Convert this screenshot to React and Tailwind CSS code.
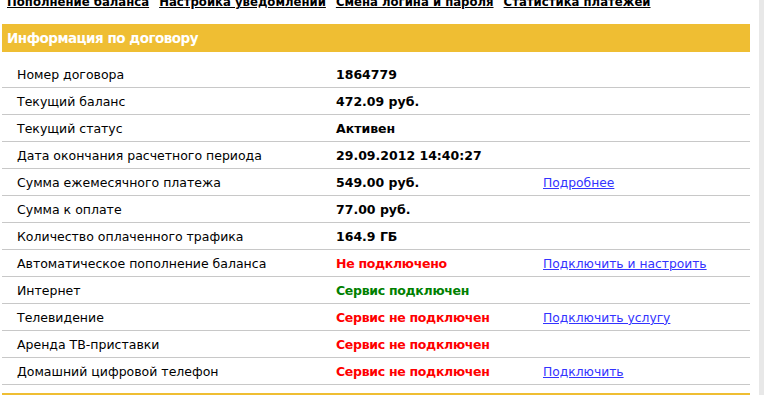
import React from 'react';

const navLinks = [
  'Пополнение баланса',
  'Настройка уведомлений',
  'Смена логина и пароля',
  'Статистика платежей',
];

const rows = [
  { label: 'Номер договора', value: '1864779' },
  { label: 'Текущий баланс', value: '472.09 руб.' },
  { label: 'Текущий статус', value: 'Активен' },
  { label: 'Дата окончания расчетного периода', value: '29.09.2012 14:40:27' },
  { label: 'Сумма ежемесячного платежа', value: '549.00 руб.', link: 'Подробнее' },
  { label: 'Сумма к оплате', value: '77.00 руб.' },
  { label: 'Количество оплаченного трафика', value: '164.9 ГБ' },
  { label: 'Автоматическое пополнение баланса', value: 'Не подключено', tone: 'red', link: 'Подключить и настроить' },
  { label: 'Интернет', value: 'Сервис подключен', tone: 'green' },
  { label: 'Телевидение', value: 'Сервис не подключен', tone: 'red', link: 'Подключить услугу' },
  { label: 'Аренда ТВ-приставки', value: 'Сервис не подключен', tone: 'red' },
  { label: 'Домашний цифровой телефон', value: 'Сервис не подключен', tone: 'red', link: 'Подключить' },
];

const toneClass = (tone) => {
  if (tone === 'red') return 'text-[#ff0000] tracking-[-0.3px]';
  if (tone === 'green') return 'text-[#008000] tracking-[-0.3px]';
  return 'text-black';
};

export default function App() {
  return (
    <div className="flex h-[395px] w-[764px] overflow-hidden bg-white font-['DejaVu_Sans',sans-serif] text-[12.5px] text-black">
      <div className="w-[759px]">
        {/* top menu, partly scrolled off */}
        <div className="-mt-[5px] flex h-[14px] gap-[10px] pl-[7px] text-[11.7px] leading-[14px]">
          {navLinks.map((t) => (
            <a key={t} href="#" className="font-bold text-black underline">
              {t}
            </a>
          ))}
        </div>

        <div className="ml-[2px] mt-[15px] w-[748px]">
          <div className="flex h-[28px] items-center bg-[#efbe33] pl-[5px] text-[13.5px] font-bold tracking-[-0.5px] text-white">
            Информация по договору
          </div>

          <div className="mt-[9px]">
            {rows.map((r) => (
              <div
                key={r.label}
                className="grid h-[27px] grid-cols-[334px_207px_1fr] items-center border-b border-[#c8c8c8] pt-[2px]"
              >
                <div className="pl-[15px]">{r.label}</div>
                <div className={`font-bold ${toneClass(r.tone)}`}>{r.value}</div>
                <div className="text-[12.3px]">
                  {r.link && (
                    <a href="#" className="text-[#3333ff] underline">
                      {r.link}
                    </a>
                  )}
                </div>
              </div>
            ))}
          </div>

          <div className="mt-[8px] h-[2px] bg-[#efbe33]" />
        </div>
      </div>
      <div className="w-[5px] bg-[#e8e8e8]" />
    </div>
  );
}
